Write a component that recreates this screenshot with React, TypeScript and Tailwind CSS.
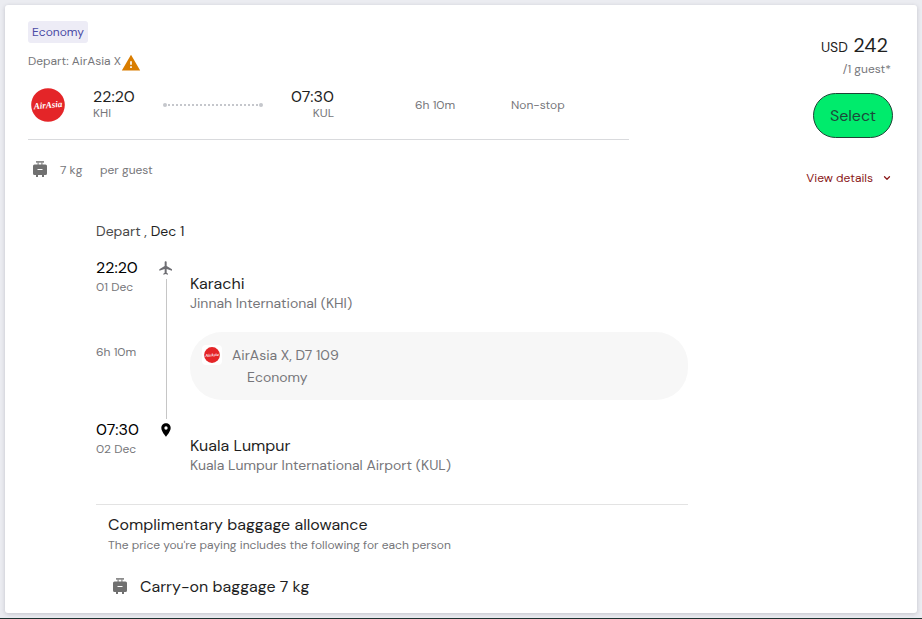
import { ChevronDown } from "lucide-react";
import { MdFlight, MdPlace, MdWarning } from "react-icons/md";

interface Stop {
  time: string;
  date: string;
  city: string;
  airport: string;
}

const departure: Stop = {
  time: "22:20",
  date: "01 Dec",
  city: "Karachi",
  airport: "Jinnah International (KHI)",
};

const arrival: Stop = {
  time: "07:30",
  date: "02 Dec",
  city: "Kuala Lumpur",
  airport: "Kuala Lumpur International Airport (KUL)",
};

function AirAsiaLogo({ className }: { className?: string }) {
  return (
    <svg viewBox="0 0 34 34" className={className} role="img" aria-label="AirAsia">
      <circle cx="17" cy="17" r="16.8" fill="#e42528" />
      <text
        x="17"
        y="20"
        textAnchor="middle"
        fontFamily="'Liberation Serif', serif"
        fontSize="9"
        fontWeight="700"
        fontStyle="italic"
        fill="#fff"
        transform="rotate(-5 17 17)"
      >
        AirAsia
      </text>
    </svg>
  );
}

function LuggageIcon() {
  return (
    <svg viewBox="0 0 16 18" className="mb-[2px] h-[18px] w-4 shrink-0 text-[#707070]" fill="currentColor" aria-hidden="true">
      <path d="M4 1h8v1.8h-1.5V5H9.3V2.8H6.7V5H5.5V2.8H4z" opacity=".8" />
      <path
        fillRule="evenodd"
        d="M2.5 4.500h11A1.5 1.5 0 0 1 15 6v7.500a1.5 1.5 0 0 1-1.5 1.500h-11A1.5 1.5 0 0 1 1 13.500V6A1.5 1.5 0 0 1 2.500 4.500zM5.500 9v1h5V9z"
      />
      <path d="M4 15h2v2H4zM10 15h2v2h-2z" />
    </svg>
  );
}

function StopTime({ stop }: { stop: Stop }) {
  return (
    <div>
      <div className="text-base leading-5 text-black">{stop.time}</div>
      <div className="text-xs leading-[18px] text-[#76767a]">{stop.date}</div>
    </div>
  );
}

function StopPlace({ stop }: { stop: Stop }) {
  return (
    <div>
      <div className="text-base leading-5 text-[#1f1f1f]">{stop.city}</div>
      <div className="text-sm leading-[19px] text-[#76767a]">{stop.airport}</div>
    </div>
  );
}

function Summary() {
  return (
    <div className="flex-1">
      <div className="w-fit rounded-[3px] bg-[#edecf6] px-1 text-xs leading-[22px] text-[#4a4aa5]">Economy</div>
      <div className="mt-2 flex h-5 items-center text-xs text-[#76767a]">
        Depart: AirAsia X
        <MdWarning className="mt-1 size-5 text-[#d97d00]" />
      </div>
      <div className="mt-[17px] flex items-center border-b border-[#d9dadd] pb-[17px] text-xs leading-4 text-[#76767a]">
        <AirAsiaLogo className="ml-[3px] size-[34px]" />
        <div className="ml-7 w-[70px]">
          <div className="text-base leading-4 text-[#1f1f1f]">22:20</div>
          <div>KHI</div>
        </div>
        <svg width="100" height="4" className="text-[#c5c7cc]" fill="currentColor" aria-hidden="true">
          <circle cx="2" cy="2" r="2" />
          <path d="M5 2h90" stroke="currentColor" strokeWidth="2" strokeDasharray="2 2" />
          <circle cx="98" cy="2" r="2" />
        </svg>
        <div className="w-[71px] text-right">
          <div className="text-base leading-4 text-[#1f1f1f]">07:30</div>
          <div>KUL</div>
        </div>
        <div className="ml-[81px] w-24">6h 10m</div>
        <div>Non-stop</div>
      </div>
      <div className="mt-5 flex items-center pl-1 text-xs leading-5 text-[#76767a]">
        <LuggageIcon />
        <span className="ml-3 w-10">7 kg</span>
        <span>per guest</span>
      </div>
    </div>
  );
}

function PricePanel() {
  return (
    <div className="flex w-[264px] flex-col items-end pt-3">
      <div className="pr-[5px] text-xl leading-6 text-[#1f1f1f]">
        <span className="text-sm leading-none">USD</span> 242
      </div>
      <div className="mt-px pr-[2px] text-xs leading-[22px] text-[#76767a]">/1 guest*</div>
      <button
        type="button"
        className="mt-[13px] h-[45px] w-20 rounded-full border border-[#1e4436] bg-[#00eb6c] text-base text-[#1c4a3a]"
      >
        Select
      </button>
      <button type="button" className="mt-[30px] flex items-center gap-[9px] pr-px text-xs leading-5 text-[#8b1a1a]">
        View details
        <ChevronDown className="size-[10px]" strokeWidth={3} />
      </button>
    </div>
  );
}

function Itinerary() {
  return (
    <section className="mt-[33px] pr-[205px] pl-[68px]">
      <h2 className="text-sm leading-5 text-[#4a4a4a]">
        Depart , <span className="text-[#1f1f1f]">Dec 1</span>
      </h2>
      <div className="mt-[17px] flex">
        <div className="w-[60px]">
          <StopTime stop={departure} />
          <div className="mt-[46px] mb-[58px] text-xs leading-5 text-[#76767a]">6h 10m</div>
          <StopTime stop={arrival} />
        </div>
        <div className="flex w-5 flex-col items-center pt-[2px] pb-[37px]">
          <MdFlight className="size-4 text-[#6e6e73]" />
          <div className="my-[3px] w-px flex-1 bg-[#c6c6c6]" />
          <MdPlace className="size-4 text-black" />
        </div>
        <div className="ml-[14px] flex-1 pt-4">
          <StopPlace stop={departure} />
          <div className="mt-[19px] mb-9 flex rounded-[32px] bg-[#f7f7f7] px-3 py-3 text-sm leading-[22px] text-[#76767a]">
            <div className="mt-px size-5 rounded-sm bg-white p-[2px]">
              <AirAsiaLogo className="size-4" />
            </div>
            <div className="ml-[10px]">
              <div>AirAsia X, D7 109</div>
              <div className="pl-[15px]">Economy</div>
            </div>
          </div>
          <StopPlace stop={arrival} />
        </div>
      </div>
      <div className="mt-[29px] border-t border-[#e3e3e3] px-3 pt-[10px]">
        <h3 className="text-base leading-5 text-[#1f1f1f]">Complimentary baggage allowance</h3>
        <p className="text-xs leading-5 text-[#76767a]">The price you're paying includes the following for each person</p>
        <div className="mt-[22px] flex items-center gap-3 pl-1 text-base leading-5 text-[#1f1f1f]">
          <LuggageIcon />
          Carry-on baggage 7 kg
        </div>
      </div>
    </section>
  );
}

export default function App() {
  return (
    <div className="flex min-h-screen flex-col border-b border-[#1d3330] bg-[#ebecf1] p-[5px] font-['DM_Sans',Inter,sans-serif] [font-optical-sizing:none]">
      <article className="flex-1 rounded-[3px] bg-white px-6 pt-4 pb-3 pl-[23px] shadow-[0_1px_4px_rgba(40,40,60,0.2)]">
        <div className="flex">
          <Summary />
          <PricePanel />
        </div>
        <Itinerary />
      </article>
    </div>
  );
}
